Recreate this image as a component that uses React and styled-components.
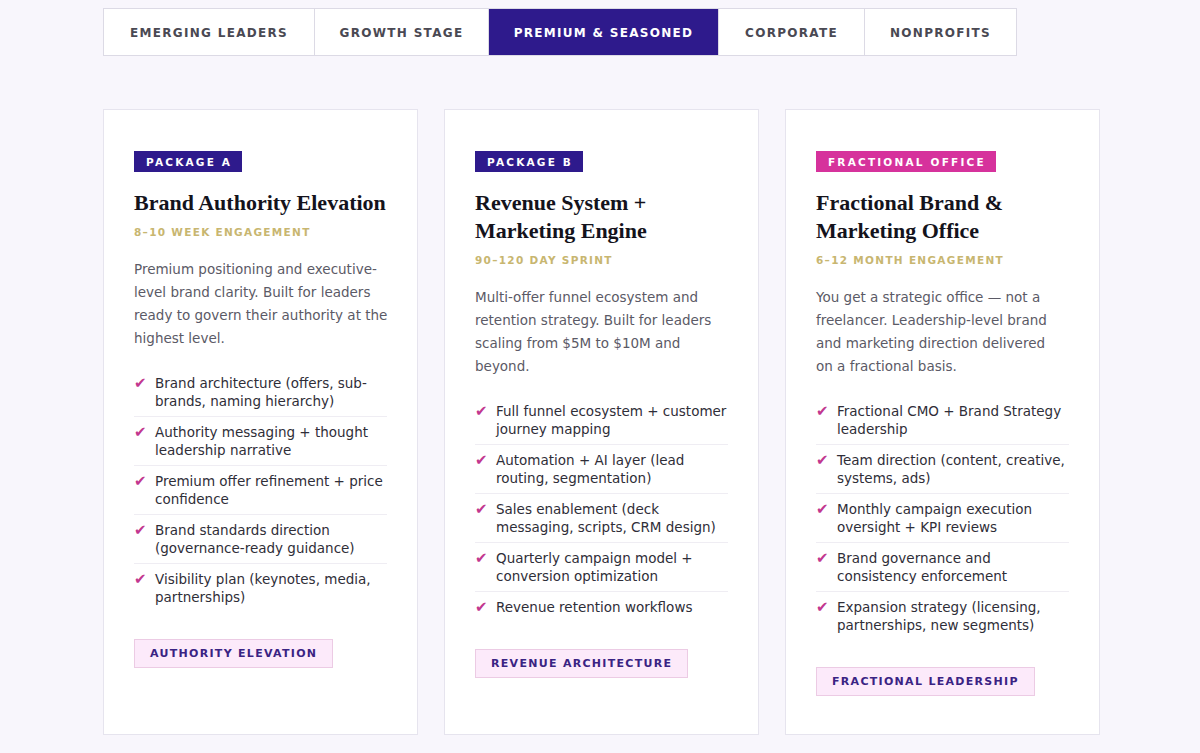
import React from "react";
import styled, { createGlobalStyle } from "styled-components";

const Global = createGlobalStyle`
  html, body { margin: 0; padding: 0; background: #f8f6fc; }
  body { font-family: "DejaVu Sans", "Noto Sans", sans-serif; }
  * { box-sizing: border-box; }
`;

const Colors = {
  indigo: "#2e1a8c",
  pink: "#d6329c",
  gold: "#c8b670",
  ink: "#14131c",
  body: "#5b5a66",
  check: "#c2378f",
  line: "#e6e4ee",
};

const Page = styled.div`
  width: 998px;
  margin-left: 103px;
  padding: 8px 0 20px;
`;

const Tabs = styled.div`
  display: flex;
  width: max-content;
  border: 1px solid #dcdae5;
  background: #fff;
`;

const Tab = styled.div`
  height: 46px;
  padding-top: 2px;
  display: flex;
  align-items: center;
  justify-content: center;
  width: ${(p) => p.w}px;
  border-left: ${(p) => (p.first ? "none" : "1px solid #dcdae5")};
  background: ${(p) => (p.active ? Colors.indigo : "#fff")};
  color: ${(p) => (p.active ? "#fff" : "#4a4953")};
  font-size: 12px;
  font-weight: 700;
  letter-spacing: 1.3px;
`;

const Grid = styled.div`
  display: grid;
  grid-template-columns: repeat(3, 315px);
  gap: 26px;
  margin-top: 53px;
`;

const Card = styled.div`
  background: #fff;
  border: 1px solid ${Colors.line};
  padding: 41px 30px 38px;
  display: flex;
  flex-direction: column;
  align-items: flex-start;
`;

const Badge = styled.div`
  background: ${(p) => (p.pink ? Colors.pink : Colors.indigo)};
  color: #fff;
  font-size: 10.5px;
  font-weight: 700;
  letter-spacing: 2.2px;
  height: 21px;
  display: flex;
  align-items: center;
  padding: 0 10px 0 12px;
`;

const Title = styled.h3`
  margin: 17px 0 0;
  font-family: "Liberation Serif", "DejaVu Serif", serif;
  font-size: 22px;
  font-weight: 700;
  line-height: 28px;
  color: ${Colors.ink};
  white-space: nowrap;
`;

const Span = styled.div`
  margin-top: 7px;
  color: ${Colors.gold};
  font-size: 10.5px;
  font-weight: 700;
  letter-spacing: 1.3px;
  line-height: 16px;
`;

const Desc = styled.p`
  margin: 18px 0 0;
  color: ${Colors.body};
  font-size: 13.5px;
  line-height: 23px;
  white-space: nowrap;
`;

const List = styled.ul`
  list-style: none;
  margin: 18px 0 0;
  padding: 0;
  width: 100%;
`;

const Item = styled.li`
  display: flex;
  gap: 9px;
  padding: 6px 0;
  border-top: ${(p) => (p.first ? "none" : `1px solid #efedf3`)};
  color: #2f2e38;
  font-size: 13.5px;
  line-height: 18px;
`;

const Check = styled.span`
  color: ${Colors.check};
  font-size: 15px;
  width: 12px;
  flex: none;
`;

const Tag = styled.div`
  margin-top: 27px;
  background: #fceafa;
  border: 1px solid #eccbe4;
  color: #3a2383;
  font-size: 11px;
  font-weight: 700;
  letter-spacing: 1.3px;
  height: 29px;
  display: flex;
  align-items: center;
  padding: 0 15px;
`;

const tabs = [
  ["EMERGING LEADERS", 210],
  ["GROWTH STAGE", 174],
  ["PREMIUM & SEASONED", 230],
  ["CORPORATE", 146],
  ["NONPROFITS", 152],
];

const cards = [
  {
    badge: "PACKAGE A",
    title: ["Brand Authority Elevation"],
    span: "8–10 WEEK ENGAGEMENT",
    desc: [
      "Premium positioning and executive-",
      "level brand clarity. Built for leaders",
      "ready to govern their authority at the",
      "highest level.",
    ],
    items: [
      "Brand architecture (offers, sub-brands, naming hierarchy)",
      "Authority messaging + thought leadership narrative",
      "Premium offer refinement + price confidence",
      "Brand standards direction (governance-ready guidance)",
      "Visibility plan (keynotes, media, partnerships)",
    ],
    tag: "AUTHORITY ELEVATION",
  },
  {
    badge: "PACKAGE B",
    title: ["Revenue System +", "Marketing Engine"],
    span: "90–120 DAY SPRINT",
    desc: [
      "Multi-offer funnel ecosystem and",
      "retention strategy. Built for leaders",
      "scaling from $5M to $10M and",
      "beyond.",
    ],
    items: [
      "Full funnel ecosystem + customer journey mapping",
      "Automation + AI layer (lead routing, segmentation)",
      "Sales enablement (deck messaging, scripts, CRM design)",
      "Quarterly campaign model + conversion optimization",
      "Revenue retention workflows",
    ],
    tag: "REVENUE ARCHITECTURE",
  },
  {
    badge: "FRACTIONAL OFFICE",
    pink: true,
    title: ["Fractional Brand &", "Marketing Office"],
    span: "6–12 MONTH ENGAGEMENT",
    desc: [
      "You get a strategic office — not a",
      "freelancer. Leadership-level brand",
      "and marketing direction delivered",
      "on a fractional basis.",
    ],
    items: [
      "Fractional CMO + Brand Strategy leadership",
      "Team direction (content, creative, systems, ads)",
      "Monthly campaign execution oversight + KPI reviews",
      "Brand governance and consistency enforcement",
      "Expansion strategy (licensing, partnerships, new segments)",
    ],
    tag: "FRACTIONAL LEADERSHIP",
  },
];

const Lines = ({ lines }) =>
  lines.map((t, i) => (
    <React.Fragment key={t}>
      {i > 0 && <br />}
      {t}
    </React.Fragment>
  ));

export default function App() {
  return (
    <Page>
      <Global />
      <Tabs>
        {tabs.map(([label, w], i) => (
          <Tab key={label} w={w} first={i === 0} active={i === 2}>
            {label}
          </Tab>
        ))}
      </Tabs>
      <Grid>
        {cards.map((c) => (
          <Card key={c.badge}>
            <Badge pink={c.pink}>{c.badge}</Badge>
            <Title>
              <Lines lines={c.title} />
            </Title>
            <Span>{c.span}</Span>
            <Desc>
              <Lines lines={c.desc} />
            </Desc>
            <List>
              {c.items.map((it, i) => (
                <Item key={it} first={i === 0}>
                  <Check>✔</Check>
                  <span>{it}</span>
                </Item>
              ))}
            </List>
            <Tag>{c.tag}</Tag>
          </Card>
        ))}
      </Grid>
    </Page>
  );
}
